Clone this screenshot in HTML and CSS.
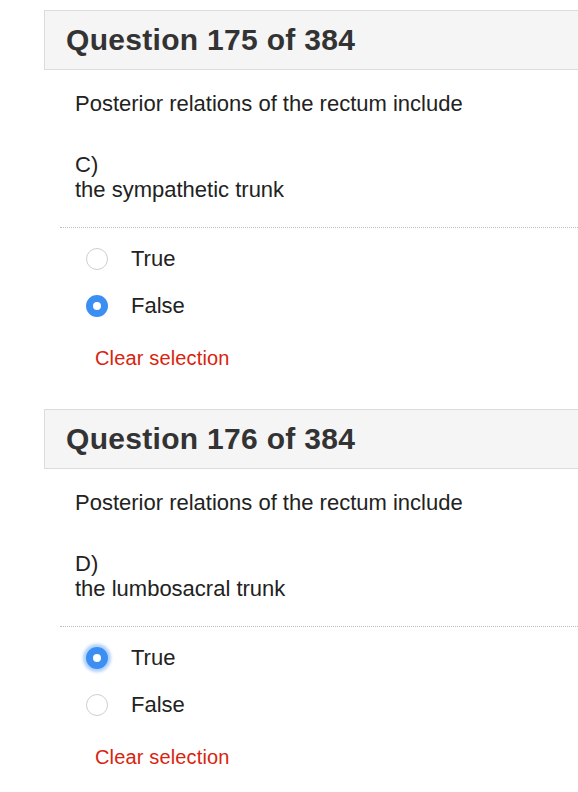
FILE: index.html
```html
<!DOCTYPE html>
<html lang="en">
<head>
<meta charset="utf-8">
<title>Questions</title>
<link rel="stylesheet" href="styles.css">
</head>
<body>
<main class="page">
  <section class="question">
    <div class="q-head"><h2>Question 175 of 384</h2></div>
    <div class="q-body">
      <p class="stem">Posterior relations of the rectum include</p>
      <p class="option">C)<br>the sympathetic trunk</p>
    </div>
    <div class="answers">
      <label class="choice"><input type="radio" name="q175"><span>True</span></label>
      <label class="choice"><input type="radio" name="q175" checked><span>False</span></label>
      <a class="clear" href="#">Clear selection</a>
    </div>
  </section>
  <section class="question">
    <div class="q-head"><h2>Question 176 of 384</h2></div>
    <div class="q-body">
      <p class="stem">Posterior relations of the rectum include</p>
      <p class="option">D)<br>the lumbosacral trunk</p>
    </div>
    <div class="answers">
      <label class="choice"><input type="radio" name="q176" class="focused" checked><span>True</span></label>
      <label class="choice"><input type="radio" name="q176"><span>False</span></label>
      <a class="clear" href="#">Clear selection</a>
    </div>
  </section>
</main>
</body>
</html>
```

FILE: styles.css
```css
html, body {
  margin: 0;
  padding: 0;
  overflow: hidden;
  background: #fff;
}

body {
  font-family: "Liberation Sans", Arial, Helvetica, sans-serif;
  color: #222;
}

.page {
  display: flex;
  flex-direction: column;
  padding-top: 10px;
  margin-left: 44px;
  width: 580px;
}

.question {
  display: flex;
  flex-direction: column;
  padding-bottom: 38px;
}

.q-head {
  background: #f5f5f5;
  border: 1px solid #dcdcdc;
  height: 58px;
  display: flex;
  align-items: center;
  padding-left: 21px;
}

.q-head h2 {
  margin: 0;
  font-size: 30px;
  font-weight: bold;
  color: #333;
  line-height: 60px;
  letter-spacing: 0.3px;
}

.q-body {
  padding: 21px 0 0 31px;
  font-size: 22px;
  line-height: 25px;
  color: #222;
}

.q-body p {
  margin: 0;
}

.q-body .stem {
  margin-bottom: 36px;
}

.answers {
  margin-left: 16px;
  margin-top: 25px;
  border-top: 1px dotted #bdbdbd;
  padding-top: 7px;
  display: flex;
  flex-direction: column;
}

.choice {
  display: flex;
  align-items: center;
  height: 47px;
  padding-left: 26px;
  gap: 23px;
  font-size: 22px;
  color: #222;
}

.choice input {
  appearance: none;
  -webkit-appearance: none;
  margin: 0;
  width: 22px;
  height: 22px;
  border-radius: 50%;
  border: 1.5px solid #cfcfcf;
  background: #fff;
  box-sizing: border-box;
  flex: none;
}

.choice input:checked {
  border: 7.5px solid #3b8ff3;
  background: #fff;
}

.choice input.focused {
  box-shadow: 0 0 3px 3px rgba(80, 150, 245, 0.45);
}

.clear {
  margin-top: 17px;
  margin-left: 35px;
  font-size: 20px;
  line-height: 25px;
  letter-spacing: 0.15px;
  color: #d9230f;
  text-decoration: none;
  align-self: flex-start;
}
```
